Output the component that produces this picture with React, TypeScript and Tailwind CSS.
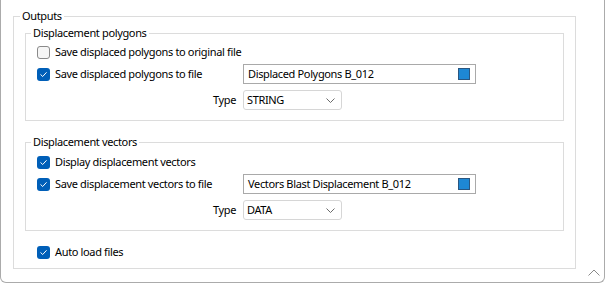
import React from "react";

const font = { fontFamily: '"Segoe UI", "Noto Sans", "Open Sans", sans-serif', letterSpacing: "-0.35px" };

function Check({ checked }: { checked: boolean }) {
  return checked ? (
    <span className="flex h-[13px] w-[13px] shrink-0 items-center justify-center rounded-[3px] bg-[#005fb8]">
      <svg width="9" height="9" viewBox="0 0 9 9" fill="none">
        <path d="M1.8 4.7 L3.7 6.5 L7.3 2.6" stroke="#ffffff" strokeWidth="1" strokeLinecap="round" strokeLinejoin="round" />
      </svg>
    </span>
  ) : (
    <span className="block h-[13px] w-[13px] shrink-0 rounded-[3px] border border-[#8a8a8a] bg-[#f6f6f6]" />
  );
}

function CheckRow({ checked, label, children }: { checked: boolean; label: string; children?: React.ReactNode }) {
  return (
    <div className="flex h-[20px] items-center">
      <Check checked={checked} />
      <span className="ml-[5px] w-[188px] whitespace-nowrap">{label}</span>
      {children}
    </div>
  );
}

function FileInput({ value }: { value: string }) {
  return (
    <div className="flex h-[20px] w-[233px] items-center border border-[#a9a9a9] bg-white pl-[4px] pr-[5px]">
      <span className="flex-1 whitespace-nowrap">{value}</span>
      <span className="block h-[12px] w-[12px] border border-[#2a5680] bg-[#1e88d4]" />
    </div>
  );
}

function TypeRow({ value }: { value: string }) {
  return (
    <div className="mt-[6px] flex h-[20px] items-center">
      <span className="w-[199px] text-right">Type</span>
      <div className="ml-[7px] flex h-[20px] w-[99px] items-center rounded-[3px] border border-[#d6d6d6] bg-white pl-[3px] pr-[6px]">
        <span className="flex-1">{value}</span>
        <svg width="9" height="5" viewBox="0 0 9 5" fill="none">
          <path d="M0.5 0.5 L4.5 4.5 L8.5 0.5" stroke="#6b6b6b" strokeWidth="1" />
        </svg>
      </div>
    </div>
  );
}

export default function App() {
  return (
    <div className="h-[284px] w-[605px] bg-white text-[11px] leading-[16px] text-black" style={font}>
      <div className="relative h-[283px] rounded-b-[6px] border-x border-b border-[#ababab] pl-[12px] pr-[28px] pt-[8px]">
        <fieldset className="h-[261px] border border-[#dcdcdc] p-0">
          <legend className="ml-[6px] px-[2px]">Outputs</legend>
          <div className="px-[11px] pb-[6px]">
            <fieldset className="mt-[1px] border border-[#dcdcdc] p-0">
              <legend className="ml-[5px] px-[2px]">Displacement polygons</legend>
              <div className="pl-[11px] pb-[10px]">
                <div className="mt-[1px] flex flex-col gap-[2px]">
                  <CheckRow checked={false} label="Save displaced polygons to original file" />
                  <CheckRow checked={true} label="Save displaced polygons to file">
                    <FileInput value="Displaced Polygons B_012" />
                  </CheckRow>
                </div>
                <TypeRow value="STRING" />
              </div>
            </fieldset>
            <fieldset className="mt-[13px] border border-[#dcdcdc] p-0">
              <legend className="ml-[5px] px-[2px]">Displacement vectors</legend>
              <div className="pl-[11px] pb-[10px]">
                <div className="mt-[2px] flex flex-col gap-[2px]">
                  <CheckRow checked={true} label="Display displacement vectors" />
                  <CheckRow checked={true} label="Save displacement vectors to file">
                    <FileInput value="Vectors Blast Displacement B_012" />
                  </CheckRow>
                </div>
                <TypeRow value="DATA" />
              </div>
            </fieldset>
            <div className="mt-[11px] pl-[12px]">
              <CheckRow checked={true} label="Auto load files" />
            </div>
          </div>
        </fieldset>
        <svg className="absolute bottom-[6px] right-[4px]" width="12" height="7" viewBox="0 0 12 7" fill="none">
          <path d="M0.5 6.5 L6 1 L11.5 6.5" stroke="#8a8a8a" strokeWidth="1" />
        </svg>
      </div>
    </div>
  );
}
